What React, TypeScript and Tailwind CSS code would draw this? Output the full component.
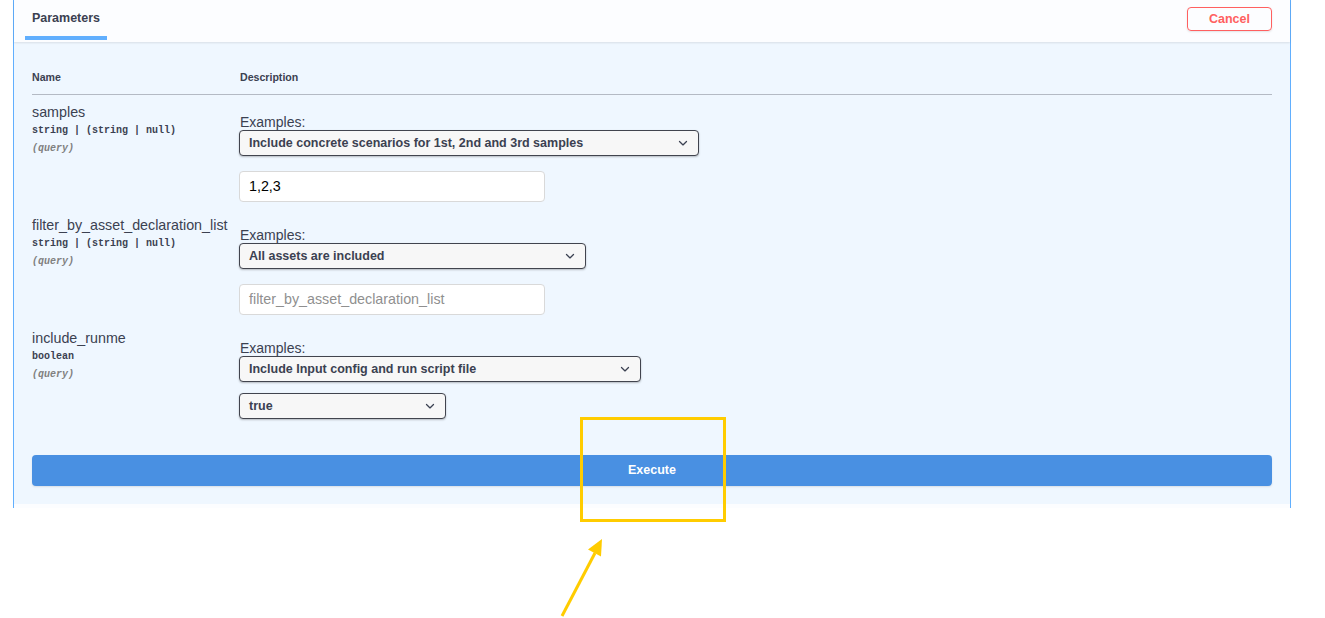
import React from 'react';

const sans = { fontFamily: '"Liberation Sans", Arial, sans-serif' };

function Chevron() {
  return (
    <svg viewBox="0 0 20 20" className="w-[18px] h-[18px] shrink-0" fill="#3b4151">
      <path d="M13.418 7.859a.695.695 0 0 1 .978 0 .68.68 0 0 1 0 .969l-3.908 3.83a.697.697 0 0 1-.979 0l-3.908-3.83a.68.68 0 0 1 0-.969.695.695 0 0 1 .978 0L10 11l3.418-3.141z" />
    </svg>
  );
}

function Select({ value, width }: { value: string; width: string }) {
  return (
    <div
      className={`${width} h-[26px] flex items-center justify-between pl-[9px] pr-[6px] bg-[#f7f7f7] border border-[#41444e] rounded-[4px] shadow-[0_1px_2px_rgba(0,0,0,0.25)] text-[12.5px] font-bold text-[#3b4151]`}
    >
      <span>{value}</span>
      <Chevron />
    </div>
  );
}

function TextInput({ value, placeholder }: { value?: string; placeholder: string }) {
  return (
    <div className="mt-[15px] w-[306px] h-[31px] flex items-center px-[9px] bg-white border border-[#d9d9d9] rounded-[4px] text-[14.3px]">
      {value ? (
        <span className="text-black">{value}</span>
      ) : (
        <span className="text-[#8f8f8f]">{placeholder}</span>
      )}
    </div>
  );
}

type Param = {
  name: string;
  type: string;
  example: string;
  exampleWidth: string;
  input: React.ReactNode;
};

const params: Param[] = [
  {
    name: 'samples',
    type: 'string | (string | null)',
    example: 'Include concrete scenarios for 1st, 2nd and 3rd samples',
    exampleWidth: 'w-[460px]',
    input: <TextInput value="1,2,3" placeholder="samples" />,
  },
  {
    name: 'filter_by_asset_declaration_list',
    type: 'string | (string | null)',
    example: 'All assets are included',
    exampleWidth: 'w-[347px]',
    input: <TextInput placeholder="filter_by_asset_declaration_list" />,
  },
  {
    name: 'include_runme',
    type: 'boolean',
    example: 'Include Input config and run script file',
    exampleWidth: 'w-[402px]',
    input: (
      <div className="mt-[11px]">
        <Select value="true" width="w-[207px]" />
      </div>
    ),
  },
];

function ParamRow({ p }: { p: Param }) {
  return (
    <div className="flex pt-[9px] pb-[6px]">
      <div className="w-[207px] shrink-0">
        <div className="text-[14.3px] leading-[16px] text-[#3b4151] whitespace-nowrap">{p.name}</div>
        <div
          className="mt-px h-[18px] flex items-center text-[10px] font-bold text-[#3b4151]"
          style={{ fontFamily: '"Liberation Mono", monospace' }}
        >
          {p.type}
        </div>
        <div
          className="h-[18px] flex items-center text-[10px] font-bold italic text-[#808080]"
          style={{ fontFamily: '"Liberation Mono", monospace' }}
        >
          (query)
        </div>
      </div>
      <div className="pt-[10px]">
        <div className="pl-px text-[14px] leading-[16px] text-[#3b4151]">Examples:</div>
        <Select value={p.example} width={p.exampleWidth} />
        {p.input}
      </div>
    </div>
  );
}

export default function App() {
  return (
    <div className="relative w-full h-[618px] bg-white overflow-hidden" style={sans}>
      <div className="ml-[13px] w-[1278px] h-[508px] border-x border-[#61affe] bg-[#fcfdff]">
        {/* section header with tab + cancel */}
        <div className="relative z-10 h-[42px] flex justify-between bg-[#fcfdff] shadow-[0_1px_2px_rgba(0,0,0,0.1)]">
          <div className="ml-[11px] w-[82px] h-full flex flex-col justify-end items-center pb-[2px]">
            <span className="mb-[10px] text-[12.5px] leading-[16px] font-bold text-[#3b4151]">Parameters</span>
            <div className="w-full h-[4px] bg-[#61affe]" />
          </div>
          <button className="mt-[7px] mr-[18px] w-[85px] h-[24px] border-[1.5px] border-[#ff6060] rounded-[4px] bg-transparent text-[12.5px] font-bold text-[#ff6060] shadow-[0_1px_2px_rgba(0,0,0,0.1)]">
            Cancel
          </button>
        </div>

        {/* parameters table */}
        <div className="bg-[#eff7ff] px-[18px] pb-[18px]">
          <div className="flex pt-[28px] pb-[10px] border-b border-[#b4bac4] text-[10.6px] leading-[14px] font-bold text-[#3b4151]">
            <div className="w-[208px]">Name</div>
            <div>Description</div>
          </div>
          {params.map((p) => (
            <ParamRow key={p.name} p={p} />
          ))}
          <button className="mt-[30px] w-full h-[31px] bg-[#4990e2] rounded-[4px] text-[12.5px] font-bold text-white shadow-[0_1px_2px_rgba(0,0,0,0.1)]">
            Execute
          </button>
        </div>
      </div>

      {/* highlight box and pointer */}
      <div className="absolute left-[580px] top-[417px] w-[146px] h-[105px] border-[3px] border-[#ffcc00]" />
      <svg className="absolute left-0 top-0 pointer-events-none" width="1325" height="618">
        <line x1="562" y1="616" x2="595" y2="553" stroke="#ffcc00" strokeWidth="3" />
        <polygon points="602,539 588,549.5 601,556.5" fill="#ffcc00" />
      </svg>
    </div>
  );
}
